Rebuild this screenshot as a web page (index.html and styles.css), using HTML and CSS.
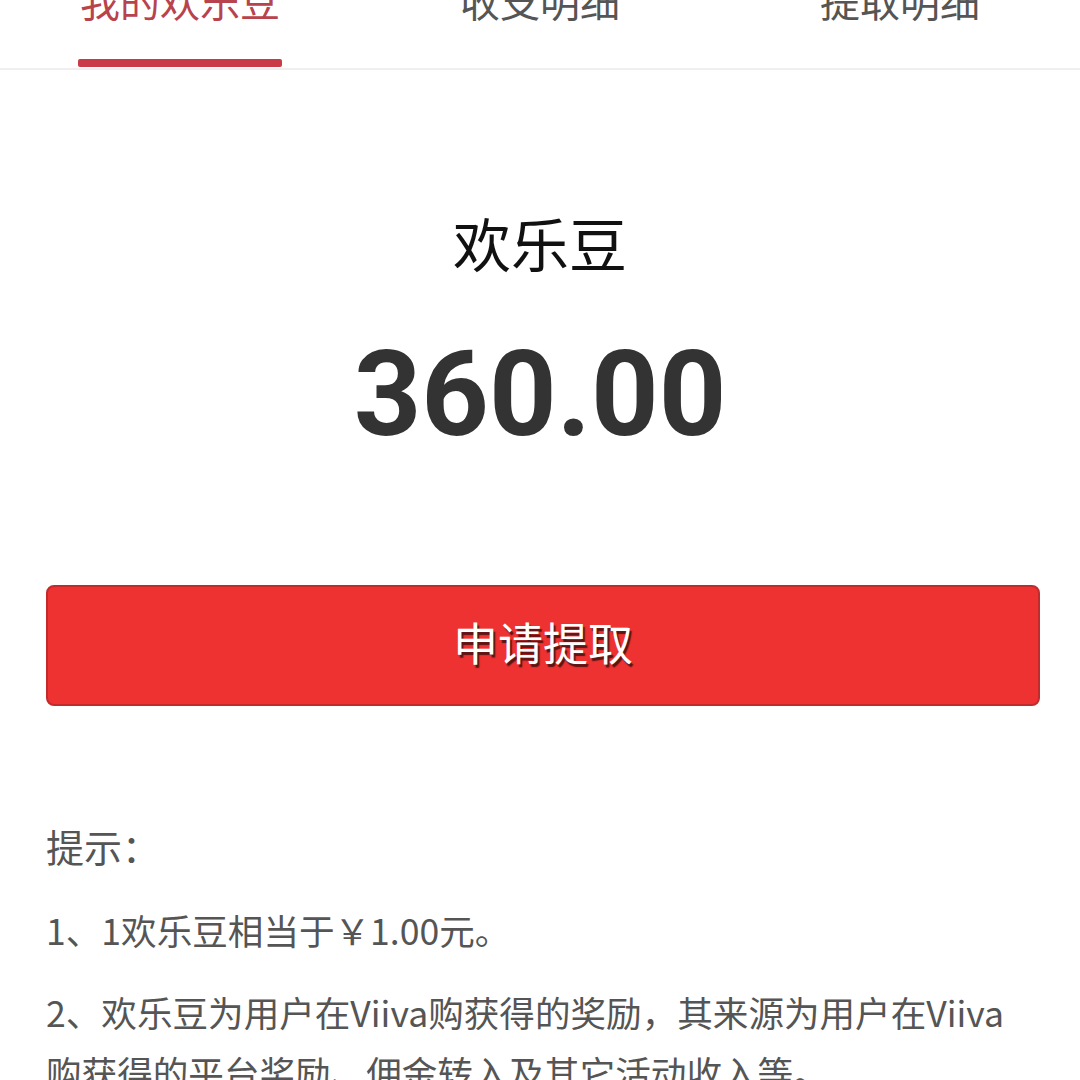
FILE: index.html
```html
<!DOCTYPE html>
<html lang="zh-CN">
<head>
<meta charset="utf-8">
<title>我的欢乐豆</title>
<link rel="stylesheet" href="styles.css">
</head>
<body>
<div class="page">
  <nav class="tabs">
    <div class="tab active"><span class="tab-label">我的欢乐豆</span><span class="tab-bar"></span></div>
    <div class="tab"><span class="tab-label">收支明细</span><span class="tab-bar"></span></div>
    <div class="tab"><span class="tab-label">提取明细</span><span class="tab-bar"></span></div>
  </nav>
  <section class="balance">
    <div class="balance-title">欢乐豆</div>
    <div class="balance-amount">360.00</div>
  </section>
  <div class="action">
    <button class="withdraw-btn">申请提取</button>
  </div>
  <section class="tips">
    <div class="tips-title">提示：</div>
    <p class="tip">1、1欢乐豆相当于￥1.00元。</p>
    <p class="tip">2、欢乐豆为用户在Viiva购获得的奖励，其来源为用户在Viiva购获得的平台奖励、佣金转入及其它活动收入等。</p>
  </section>
</div>
</body>
</html>
```

FILE: styles.css
```css
html, body {
  margin: 0;
  padding: 0;
  background: #ffffff;
  overflow: hidden;
}
body {
  width: 1080px;
  height: 1080px;
  font-family: "Noto Sans CJK SC", "Noto Sans", sans-serif;
  color: #333;
}
.page {
  display: flex;
  flex-direction: column;
}
.tabs {
  display: grid;
  grid-template-columns: repeat(3, 1fr);
  margin-top: -24px;
  height: 92px;
  border-bottom: 2px solid #efefef;
}
.tab {
  display: flex;
  flex-direction: column;
  align-items: center;
}
.tab-label {
  font-size: 40px;
  line-height: 48px;
  color: #555;
}
.tab.active .tab-label {
  color: #b8434d;
}
.tab-bar {
  margin-top: 35px;
  width: 204px;
  height: 8px;
  border-radius: 2px;
}
.tab.active .tab-bar {
  background: #c93b47;
}
.balance {
  display: flex;
  flex-direction: column;
  align-items: center;
  margin-top: 137px;
}
.balance-title {
  font-size: 58px;
  line-height: 70px;
  color: #111;
}
.balance-amount {
  margin-top: 59px;
  font-family: Roboto, "Liberation Sans", sans-serif;
  font-weight: 700;
  font-size: 118px;
  line-height: 118px;
  color: #333;
}
.action {
  padding: 0 40px 0 46px;
  margin-top: 131px;
}
.withdraw-btn {
  display: block;
  width: 100%;
  height: 121px;
  background: #ee3131;
  border: 2px solid #c22b2b;
  border-radius: 8px;
  color: #fff;
  font-family: "Noto Sans CJK SC", sans-serif;
  font-size: 45px;
  text-shadow: 2px 3px 1px #5a1515;
  padding: 0 0 8px;
}
.tips {
  padding: 0 60px 0 46px;
  margin-top: 112px;
  color: #555;
}
.tips-title {
  font-size: 38px;
  line-height: 56px;
  margin-bottom: 26px;
}
.tip {
  margin: 0 0 22px;
  font-size: 35.6px;
  line-height: 60px;
}
```
